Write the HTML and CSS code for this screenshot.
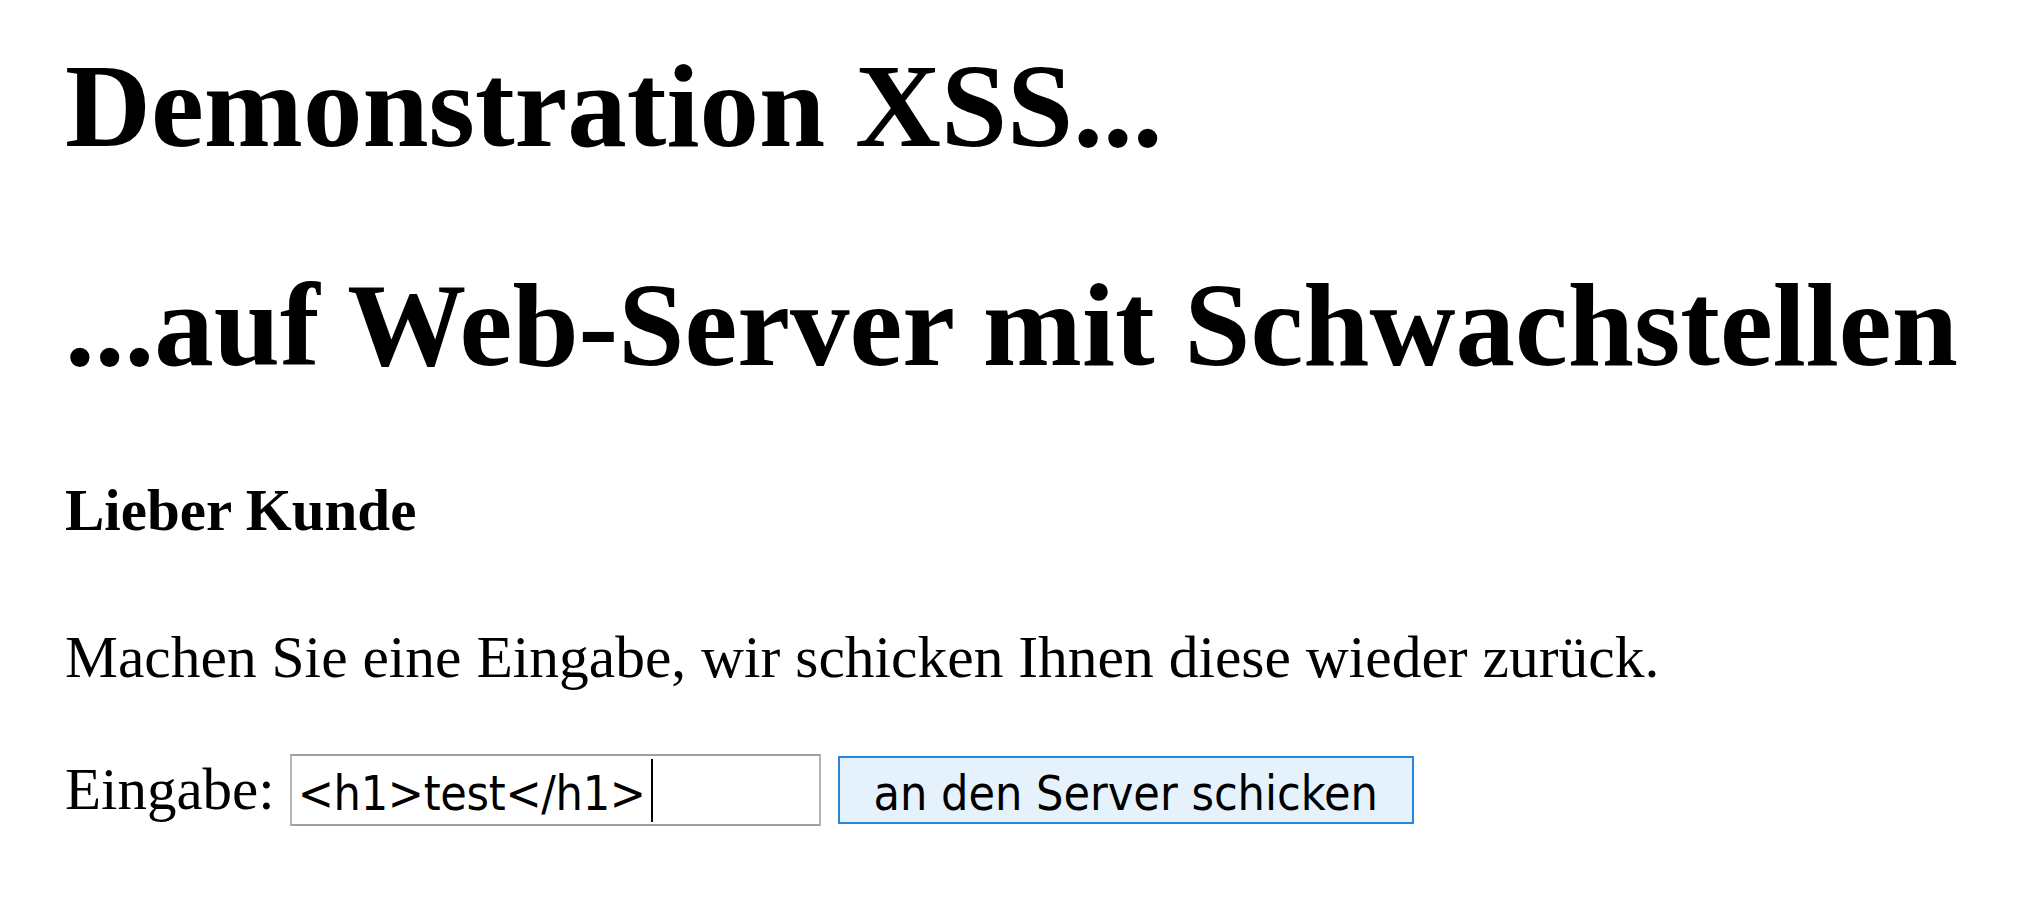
FILE: index.html
```html
<!DOCTYPE html>
<html lang="de">
<head>
<meta charset="utf-8">
<title>Demonstration XSS</title>
<link rel="stylesheet" href="styles.css">
</head>
<body>
<h1 class="title">Demonstration XSS...</h1>
<h1 class="title">...auf Web-Server mit Schwachstellen</h1>
<h4 class="greeting">Lieber Kunde</h4>
<p class="intro">Machen Sie eine Eingabe, wir schicken Ihnen diese wieder zurück.</p>
<form class="form-row" onsubmit="return false;">
  <label class="label">Eingabe:</label>
  <div class="field"><span class="field-text">&lt;h1&gt;test&lt;/h1&gt;</span><span class="caret"></span></div>
  <button type="submit" class="send">an den Server schicken</button>
</form>
</body>
</html>
```
FILE: styles.css
```css
html, body {
  background: #ffffff;
}
body {
  margin: 0;
  padding: 38px 0 0 65px;
  font-family: "Liberation Serif", "Times New Roman", serif;
  color: #000000;
}
.title {
  font-size: 119px;
  line-height: 136px;
  font-weight: bold;
  margin: 0 0 83px 0;
  white-space: nowrap;
}
.greeting {
  font-size: 59px;
  line-height: 68px;
  font-weight: bold;
  margin: 0 0 79px 0;
}
.intro {
  font-size: 59.5px;
  line-height: 68px;
  margin: 0 0 63px 0;
}
.form-row {
  display: flex;
  align-items: center;
  margin: 0;
}
.label {
  font-size: 59px;
  line-height: 68px;
  margin-bottom: 3px;
}
.field {
  box-sizing: border-box;
  display: flex;
  align-items: center;
  width: 531px;
  height: 72px;
  margin-left: 15px;
  padding: 5px 0 0 6px;
  border: 2px solid #a0a0a0;
  border-left-color: #b4b4b4;
  border-right-color: #b4b4b4;
  background: #ffffff;
  font-family: "DejaVu Sans Condensed", "DejaVu Sans", "Tahoma", sans-serif;
  font-size: 48px;
  letter-spacing: -0.3px;
  color: #000000;
}
.field-text {
  white-space: pre;
}
.caret {
  display: inline-block;
  width: 2px;
  height: 63px;
  margin-left: 5px;
  margin-top: -5px;
  background: #000000;
}
.send {
  box-sizing: border-box;
  width: 576px;
  height: 68px;
  margin-left: 17px;
  padding: 5px 0 0 0;
  border: 2px solid #2a86db;
  background: #e5f1fb;
  border-radius: 0;
  font-family: "DejaVu Sans Condensed", "DejaVu Sans", "Tahoma", sans-serif;
  font-size: 48px;
  color: #000000;
  cursor: pointer;
}
```
